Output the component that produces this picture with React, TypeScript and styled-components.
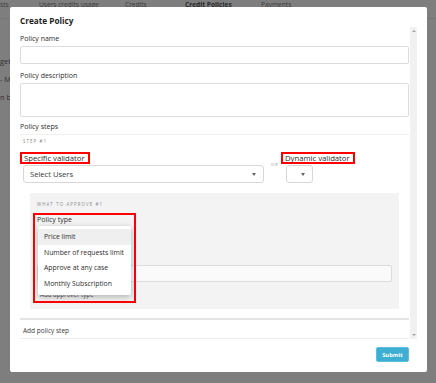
import * as React from 'react'
import styled, { createGlobalStyle } from 'styled-components'

const GlobalStyle = createGlobalStyle`
  html, body {
    margin: 0;
    padding: 0;
    background: #7e7e7e;
    font-family: "Open Sans", "Liberation Sans", sans-serif;
    color: #333;
  }
`

const Page = styled.div`
  width: 436px;
  height: 383px;
  overflow: hidden;
  background: #7e7e7e;
  position: relative;
`
const Tabs = styled.div`
  display: flex;
  height: 18px;
  border-bottom: 1px solid #767676;
  font-size: 6.6px;
  line-height: 10px;
  color: #3b3b3b;
`
const Tab = styled.div<{ $active?: boolean; $w: number }>`
  width: ${(p) => p.$w}px;
  flex-shrink: 0;
  font-weight: ${(p) => (p.$active ? 700 : 400)};
  color: ${(p) => (p.$active ? '#2a2a2a' : '#3b3b3b')};
`
const SideText = styled.div`
  padding-top: 37px;
  display: flex;
  flex-direction: column;
  gap: 8px;
  font-size: 7.4px;
  line-height: 10px;
  color: #2e2e2e;
`

const Modal = styled.div`
  position: absolute;
  top: 7px;
  left: 10px;
  width: 417px;
  height: 365px;
  background: #fff;
  border-radius: 2px;
  display: flex;
  flex-direction: column;
`
const Header = styled.div`
  height: 20px;
  padding: 7px 10px 0;
  box-sizing: border-box;
  font-size: 8.2px;
  line-height: 14px;
  font-weight: 700;
  color: #1e1e1e;
`
const BodyRow = styled.div`
  display: flex;
  gap: 1px;
  padding: 0 10px;
  height: 312px;
`
const Scroll = styled.div`
  width: 389px;
  flex-shrink: 0;
  overflow: hidden;
  padding-top: 5px;
  box-sizing: border-box;
`
const Scrollbar = styled.div`
  width: 7px;
  background: #f1f1f1;
  display: flex;
  flex-direction: column;
  justify-content: space-between;
  align-items: center;
  padding: 3px 0;
  box-sizing: border-box;
`
const Arrow = styled.div<{ $down?: boolean }>`
  width: 0;
  height: 0;
  border-left: 2px solid transparent;
  border-right: 2px solid transparent;
  ${(p) => (p.$down ? 'border-top: 2px solid #a3a3a3;' : 'border-bottom: 2px solid #a3a3a3;')}
`
const Label = styled.div<{ $mt?: number }>`
  margin-top: ${(p) => p.$mt || 0}px;
  font-size: 7px;
  line-height: 14px;
  color: #2e2e2e;
`
const Input = styled.div<{ $h: number }>`
  height: ${(p) => p.$h}px;
  border: 1px solid #dcdcdc;
  border-radius: 2px;
  box-sizing: border-box;
  background: #fff;
`

const StepCard = styled.div`
  height: 186px;
  box-sizing: border-box;
  border-top: 1px solid #f0f0f0;
  padding: 1px 3px 0;
  border-bottom: 2px solid #e4e4e4;
`
const Tiny = styled.div`
  font-size: 4.4px;
  line-height: 10px;
  letter-spacing: 1.1px;
  color: #8a8a8a;
  text-transform: uppercase;
`
const ValidatorRow = styled.div`
  display: flex;
  align-items: flex-start;
  margin-top: 6px;
`
const Column = styled.div`
  display: flex;
  flex-direction: column;
  align-items: flex-start;
`
const Marked = styled.div<{ $shift: number }>`
  height: 12px;
  box-sizing: border-box;
  border: 2px solid #f00;
  padding: 0 3px 0 2px;
  margin-left: ${(p) => -p.$shift}px;
  margin-bottom: 1px;
  font-size: 7.7px;
  line-height: 8px;
  color: #2a2a2a;
  white-space: nowrap;
`
const Or = styled.div`
  width: 15px;
  padding: 10px 0 0 7px;
  font-size: 4.2px;
  letter-spacing: 0.8px;
  line-height: 6px;
  color: #999;
`
const Select = styled.div<{ $w: number }>`
  width: ${(p) => p.$w}px;
  height: 18px;
  border: 1px solid #d8d8d8;
  border-radius: 3px;
  box-sizing: border-box;
  display: flex;
  align-items: center;
  justify-content: space-between;
  padding: 0 7px 0 6px;
  font-size: 7.6px;
  color: #3a3a3a;
`
const Caret = styled.div`
  width: 0;
  height: 0;
  border-left: 2.5px solid transparent;
  border-right: 2.5px solid transparent;
  border-top: 3px solid #666;
`

const Panel = styled.div`
  position: relative;
  margin: 10px 7px 0;
  height: 116px;
  box-sizing: border-box;
  background: #f3f3f3;
  padding: 6px 7px 0;
`
const PanelInput = styled.div<{ $mt: number }>`
  height: 17px;
  border: 1px solid #dcdcdc;
  border-radius: 2px;
  box-sizing: border-box;
  background: #fafafa;
  margin-top: ${(p) => p.$mt}px;
`
const Link = styled.div`
  margin-top: 8px;
  padding-left: 3px;
  font-size: 6.2px;
  line-height: 10px;
  color: #555;
`
// red annotation box drawn over the policy type field
const Annotation = styled.div`
  position: absolute;
  left: 3px;
  top: 20px;
  width: 103px;
  height: 90px;
  box-sizing: border-box;
  border: 2px solid #f00;
`
const Menu = styled.div`
  position: absolute;
  left: 8px;
  top: 33px;
  width: 93px;
  height: 69px;
  box-sizing: border-box;
  padding-top: 3px;
  background: #fff;
  border-radius: 2px;
  box-shadow: 0 2px 6px rgba(0, 0, 0, 0.28);
`
const MenuItem = styled.div<{ $active?: boolean }>`
  height: 15.7px;
  line-height: 15.7px;
  padding-left: 6px;
  font-size: 6.85px;
  color: #2e2e2e;
  white-space: nowrap;
  background: ${(p) => (p.$active ? '#efefef' : 'transparent')};
`
const AddStep = styled.div`
  height: 19px;
  box-sizing: border-box;
  border-bottom: 1px solid #eee;
  padding: 5px 0 0 3px;
  font-size: 6.5px;
  line-height: 12px;
  color: #3a3a3a;
`
const Footer = styled.div`
  display: flex;
  justify-content: flex-end;
  padding: 8px 18px 0;
`
const Submit = styled.button`
  width: 33px;
  height: 15px;
  padding: 0;
  border: 1px solid #5cc0dc;
  border-radius: 2px;
  background: #3eafd2;
  color: #fff;
  font-family: "Open Sans", "Liberation Sans", sans-serif;
  font-size: 5.8px;
  font-weight: 700;
`

const policyTypes = ['Price limit', 'Number of requests limit', 'Approve at any case', 'Monthly Subscription']

export default class App extends React.Component {
  render(): JSX.Element {
    return (
      <Page>
        <GlobalStyle />
        <Tabs>
          <Tab $w={39}>sts</Tab>
          <Tab $w={86}>Users credits usage</Tab>
          <Tab $w={60}>Credits</Tab>
          <Tab $w={76} $active>Credit Policies</Tab>
          <Tab $w={60}>Payments</Tab>
        </Tabs>
        <SideText>
          <div>get</div>
          <div>- M</div>
          <div>n bu</div>
        </SideText>

        <Modal>
          <Header>Create Policy</Header>
          <BodyRow>
            <Scroll>
              <Label>Policy name</Label>
              <Input $h={18} />
              <Label $mt={5}>Policy description</Label>
              <Input $h={34} />
              <Label $mt={3}>Policy steps</Label>

              <StepCard>
                <Tiny>Step #1</Tiny>
                <ValidatorRow>
                  <Column>
                    <Marked $shift={3}>Specific validator</Marked>
                    <Select $w={241}>
                      Select Users
                      <Caret />
                    </Select>
                  </Column>
                  <Or>OR</Or>
                  <Column>
                    <Marked $shift={5}>Dynamic validator</Marked>
                    <Select $w={27}>
                      <span />
                      <Caret />
                    </Select>
                  </Column>
                </ValidatorRow>

                <Panel>
                  <Tiny>What to approve #1</Tiny>
                  <Label $mt={4}>Policy type</Label>
                  <PanelInput $mt={38} />
                  <Link>Add approver type</Link>
                  <Annotation />
                  <Menu>
                    {policyTypes.map((t, i) => (
                      <MenuItem key={t} $active={i === 0}>{t}</MenuItem>
                    ))}
                  </Menu>
                </Panel>
              </StepCard>

              <AddStep>Add policy step</AddStep>
            </Scroll>
            <Scrollbar>
              <Arrow />
              <Arrow $down />
            </Scrollbar>
          </BodyRow>
          <Footer>
            <Submit>Submit</Submit>
          </Footer>
        </Modal>
      </Page>
    )
  }
}
